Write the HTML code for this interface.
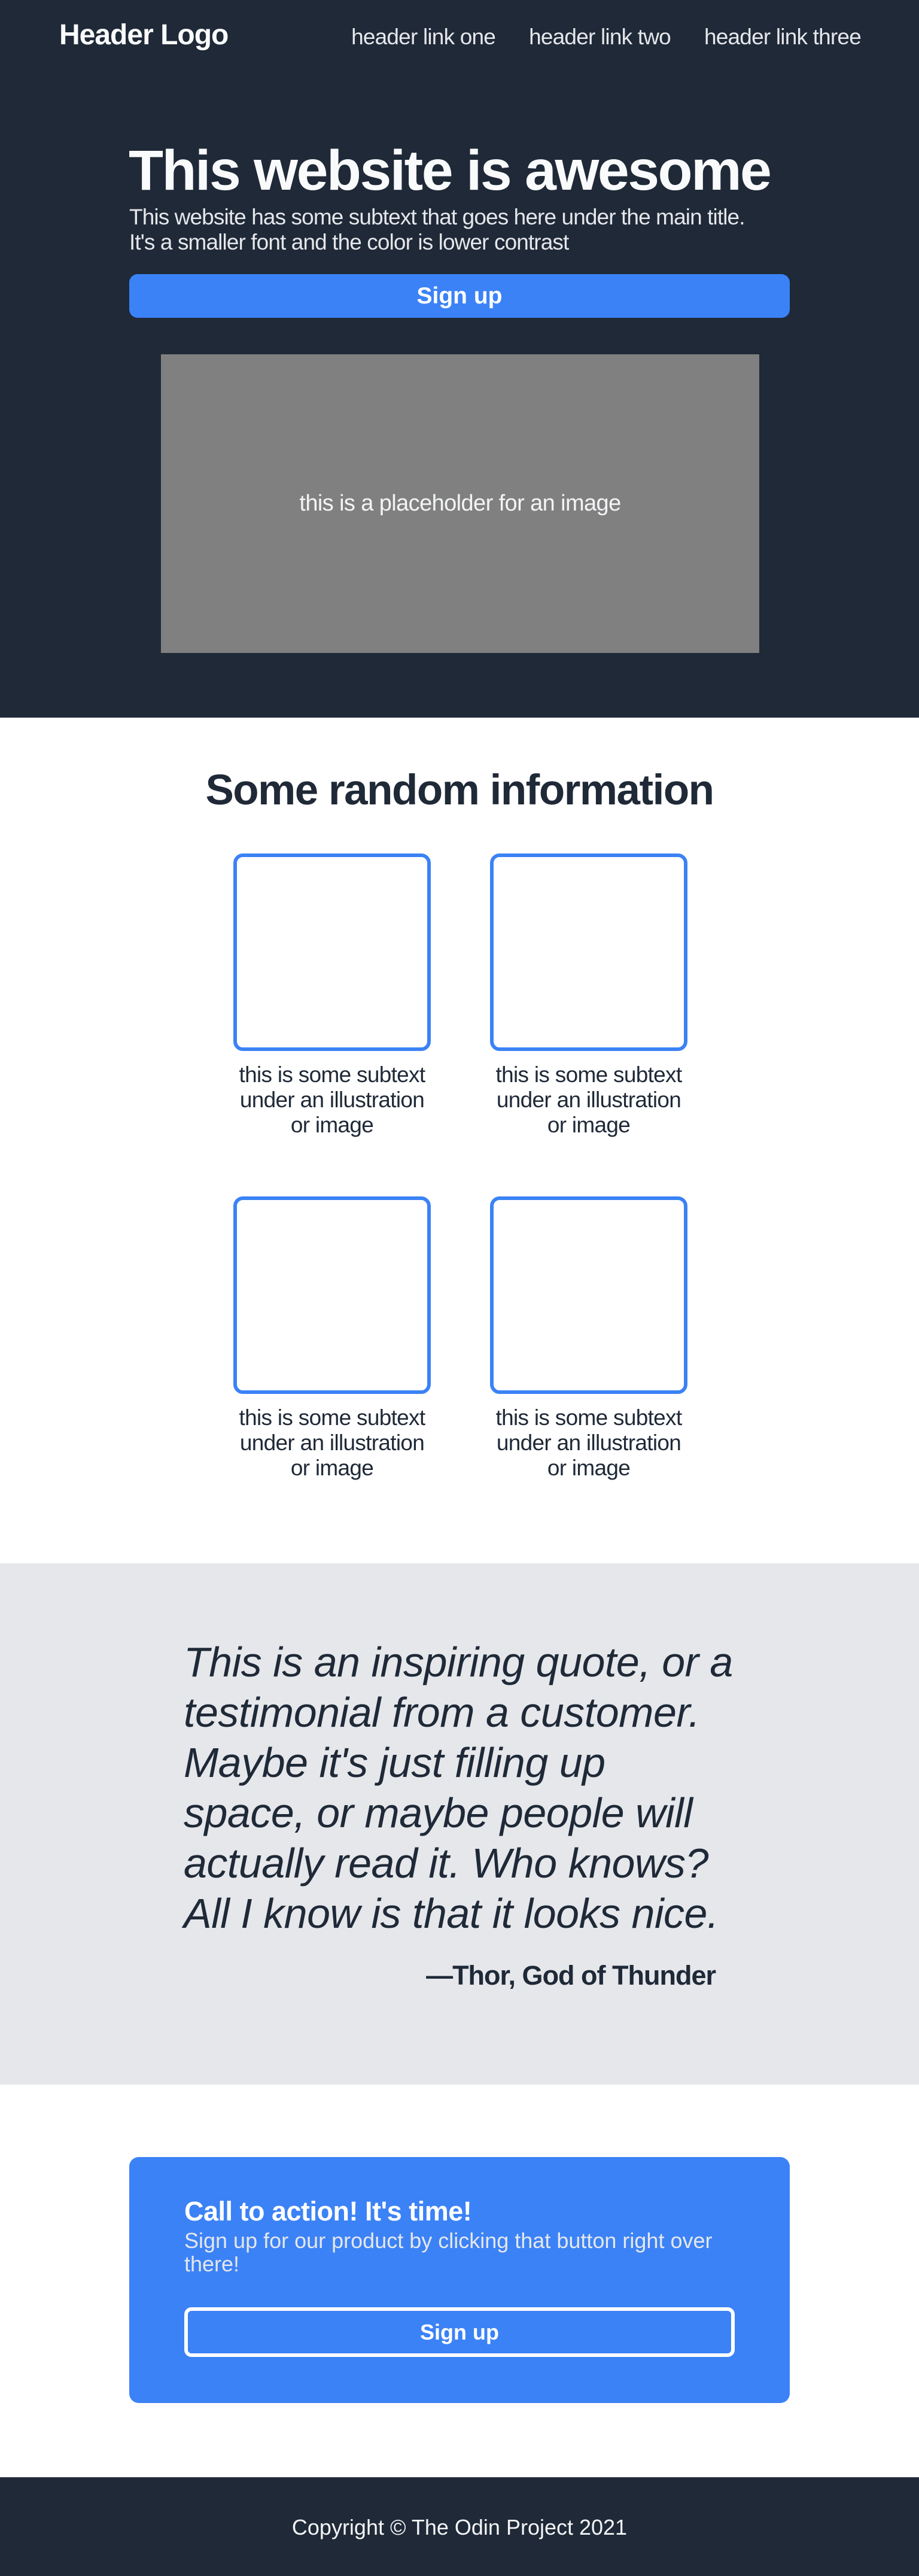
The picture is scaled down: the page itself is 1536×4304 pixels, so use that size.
<!DOCTYPE html>
<html><head><meta charset="utf-8">
<style>
*{margin:0;padding:0;box-sizing:border-box}
body{width:1536px;height:4304px;position:relative;font-family:"Liberation Sans",Arial,sans-serif;background:#fff;overflow:hidden}
.a{position:absolute;white-space:nowrap}
.dark{background:#1f2937}
</style></head><body>
<div class="a dark" style="left:0;top:0;width:1536px;height:1199px"></div>
<div class="a" style="left:99px;top:35px;font-size:48px;line-height:48px;font-weight:bold;color:#f9fafb;letter-spacing:-1px">Header Logo</div>
<div class="a" style="right:97px;top:43px;font-size:37px;line-height:37px;color:#e5e7eb;display:flex;gap:56px;letter-spacing:-0.8px">
<span>header link one</span><span>header link two</span><span>header link three</span></div>
<div class="a" style="left:215px;top:236px;font-size:95px;line-height:98px;font-weight:bold;color:#f9fafb;letter-spacing:-2.5px">This website is awesome</div>
<div class="a" style="left:216px;top:342px;font-size:37px;line-height:42px;color:#e5e7eb;letter-spacing:-0.9px">This website has some subtext that goes here under the main title.<br>It's a smaller font and the color is lower contrast</div>
<div class="a" style="left:216px;top:458px;width:1104px;height:73px;background:#3b82f6;border-radius:14px;color:#fff;font-weight:bold;font-size:39px;line-height:73px;text-align:center">Sign up</div>
<div class="a" style="left:269px;top:592px;width:1000px;height:499px;background:#808080;color:#f3f4f6;font-size:38px;line-height:499px;text-align:center;letter-spacing:-0.6px">this is a placeholder for an image</div>

<div class="a" style="left:0;width:1536px;top:1282px;font-size:71px;line-height:78px;font-weight:bold;color:#1f2937;text-align:center;letter-spacing:-1.5px">Some random information</div>

<div class="a" style="left:390px;top:1426px;width:330px;height:330px;border:6px solid #3b82f6;border-radius:16px"></div>
<div class="a" style="left:819px;top:1426px;width:330px;height:330px;border:6px solid #3b82f6;border-radius:16px"></div>
<div class="a" style="left:390px;top:1999px;width:330px;height:330px;border:6px solid #3b82f6;border-radius:16px"></div>
<div class="a" style="left:819px;top:1999px;width:330px;height:330px;border:6px solid #3b82f6;border-radius:16px"></div>
<div class="a" style="left:355px;width:400px;top:1775px;font-size:37px;line-height:42px;color:#1f2937;text-align:center;letter-spacing:-0.7px">this is some subtext<br>under an illustration<br>or image</div>
<div class="a" style="left:784px;width:400px;top:1775px;font-size:37px;line-height:42px;color:#1f2937;text-align:center;letter-spacing:-0.7px">this is some subtext<br>under an illustration<br>or image</div>
<div class="a" style="left:355px;width:400px;top:2348px;font-size:37px;line-height:42px;color:#1f2937;text-align:center;letter-spacing:-0.7px">this is some subtext<br>under an illustration<br>or image</div>
<div class="a" style="left:784px;width:400px;top:2348px;font-size:37px;line-height:42px;color:#1f2937;text-align:center;letter-spacing:-0.7px">this is some subtext<br>under an illustration<br>or image</div>

<div class="a" style="left:0;top:2612px;width:1536px;height:871px;background:#e5e7eb"></div>
<div class="a" style="left:307px;top:2735px;font-size:70px;line-height:84px;font-style:italic;color:#1f2937;letter-spacing:-0.5px">This is an inspiring quote, or a<br>testimonial from a customer.<br>Maybe it's just filling up<br>space, or maybe people will<br>actually read it. Who knows?<br>All I know is that it looks nice.</div>
<div class="a" style="right:340px;top:3278px;font-size:45px;line-height:46px;font-weight:bold;color:#1f2937;letter-spacing:-1px">—Thor, God of Thunder</div>

<div class="a" style="left:216px;top:3604px;width:1104px;height:411px;background:#3b82f6;border-radius:16px"></div>
<div class="a" style="left:308px;top:3672px;font-size:45px;line-height:46px;font-weight:bold;color:#fff;letter-spacing:-0.5px">Call to action! It's time!</div>
<div class="a" style="left:308px;top:3724px;font-size:36px;line-height:39px;color:#e5e7eb">Sign up for our product by clicking that button right over<br>there!</div>
<div class="a" style="left:308px;top:3855px;width:920px;height:83px;border:6px solid #fff;border-radius:12px;color:#fff;font-weight:bold;font-size:36px;line-height:71px;text-align:center">Sign up</div>

<div class="a dark" style="left:0;top:4139px;width:1536px;height:165px"></div>
<div class="a" style="left:0;width:1536px;top:4201px;font-size:36px;line-height:44px;color:#f3f4f6;text-align:center">Copyright © The Odin Project 2021</div>
</body></html>
